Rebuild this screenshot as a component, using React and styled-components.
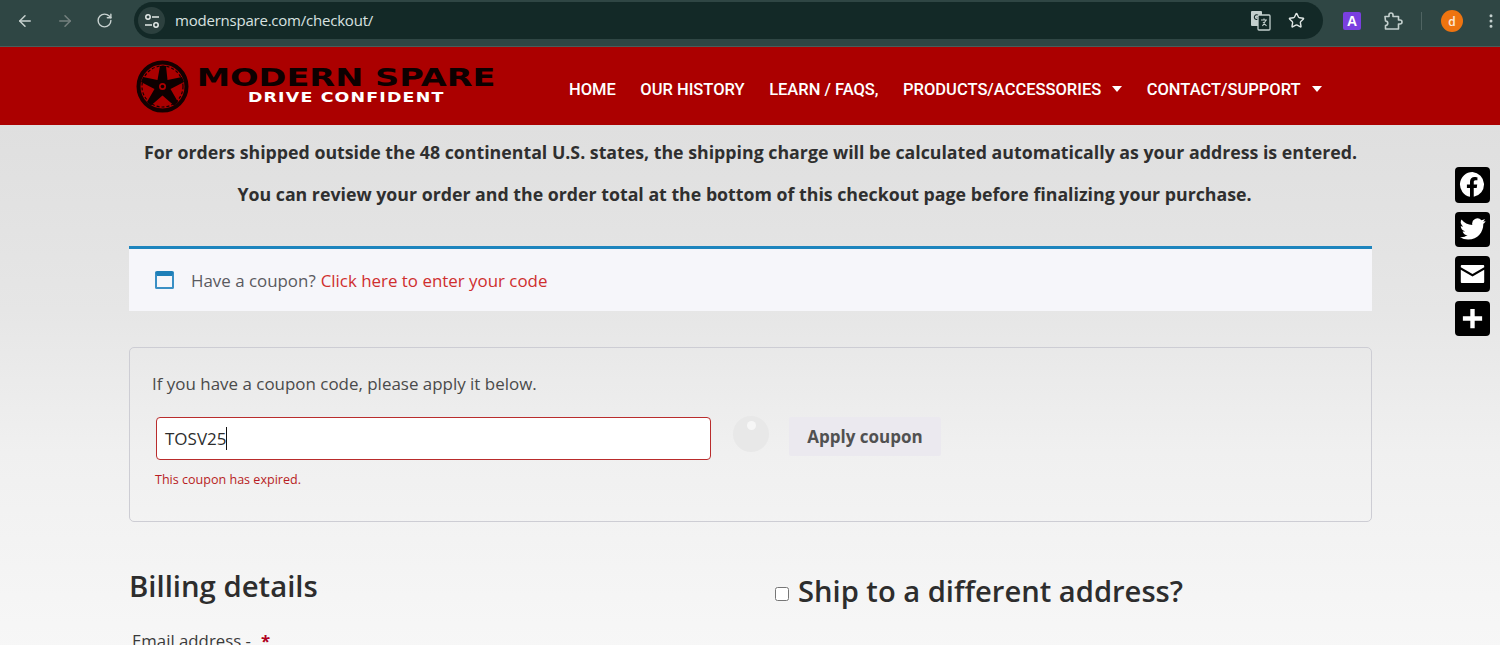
import styled, { createGlobalStyle } from "styled-components"
import { ArrowLeft, ArrowRight, RotateCw, Star, EllipsisVertical } from "lucide-react"

const GlobalStyle = createGlobalStyle`
html, body {
  margin: 0;
  padding: 0;
  height: 645px;
  overflow: hidden;
  font-family: "Open Sans", "Noto Sans", sans-serif;
}
* { box-sizing: border-box; }
`

const Shell = styled.div`
  position: relative;
  width: 1500px;
  height: 645px;
  overflow: hidden;
  display: flex;
  flex-direction: column;
`

const BrowserBar = styled.div`
  height: 47px;
  flex: none;
  background: #2f4644;
  border-bottom: 1px solid #4a5c5a;
  display: flex;
  align-items: flex-start;
  padding: 2px 0 0 16px;
`

const NavIcons = styled.div`
  display: flex;
  gap: 22px;
  width: 118px;
  padding-top: 10px;
  color: #c8d2d0;
`

const Dim = styled.span`
  color: #75817f;
  display: flex;
`

const Omnibox = styled.div`
  width: 1189px;
  height: 37px;
  background: #132927;
  border-radius: 19px;
  display: flex;
  align-items: center;
  padding: 0 18px 0 4px;
  color: #dfe6e4;
`

const SiteChip = styled.div`
  width: 27px;
  height: 27px;
  border-radius: 50%;
  background: #2c403e;
  display: flex;
  align-items: center;
  justify-content: center;
  margin-right: 10px;
  color: #e4eae8;
`

const Url = styled.span`
  font-size: 15px;
  line-height: 18px;
  margin-top: -1px;
  flex: 1;
  color: #d9e2e0;
  letter-spacing: -0.22px;
`

const OmniActions = styled.div`
  display: flex;
  align-items: center;
  gap: 17px;
`

const ToolIcons = styled.div`
  display: flex;
  align-items: center;
  padding: 8px 0 0 20px;
  color: #c4d0ce;
`

const ExtBadge = styled.div`
  width: 18px;
  height: 18px;
  background: #7a3fe0;
  color: #fff;
  border-radius: 2px;
  font: 700 14px "Liberation Sans", sans-serif;
  display: flex;
  align-items: center;
  justify-content: center;
  margin-right: 22px;
`

const Divider = styled.div`
  width: 1px;
  height: 18px;
  background: #506462;
  margin: 0 19px 0 18px;
`

const Avatar = styled.div`
  width: 22px;
  height: 22px;
  border-radius: 50%;
  background: #ee7410;
  color: #fde6cf;
  font: 500 13px Roboto, sans-serif;
  display: flex;
  align-items: center;
  justify-content: center;
  margin-right: 19px;
`

const SiteHeader = styled.header`
  height: 78px;
  flex: none;
  background: #ab0000;
  display: flex;
  align-items: center;
  padding-left: 136px;
`

const Logo = styled.div`
  width: 433px;
  display: flex;
  align-items: center;
  gap: 8px;
`

const LogoWords = styled.div`
  display: flex;
  flex-direction: column;
  align-items: center;
  width: 298px;
`

const LogoTitle = styled.div`
  font: 700 24.5px/24px "DejaVu Sans", sans-serif;
  color: #0d0000;
  transform: scaleX(1.37);
  white-space: nowrap;
  margin-top: -2px;
`

const LogoTag = styled.div`
  font: 700 13.5px/14px "DejaVu Sans", sans-serif;
  color: #fff;
  transform: scaleX(1.29);
  letter-spacing: 0.9px;
  white-space: nowrap;
`

const Menu = styled.nav`
  display: flex;
  align-items: center;
  gap: 24.5px;
  padding-top: 6px;
`

const MenuItem = styled.a`
  font: 500 16.5px Roboto, sans-serif;
  color: #fff;
  display: flex;
  align-items: center;
  gap: 11px;
  white-space: nowrap;
`

const Caret = styled.span`
  width: 0;
  height: 0;
  border-left: 5px solid transparent;
  border-right: 5px solid transparent;
  border-top: 6px solid #fff;
`

const Page = styled.main`
  flex: 1;
  background: linear-gradient(180deg, #dfdfdf 0%, #e6e6e6 35%, #f0f0f0 62%, #f7f7f7 100%);
  padding: 0 128px 0 129px;
`

const Notice = styled.p`
  margin: 0;
  font-weight: 700;
  font-size: 17.75px;
  line-height: 24px;
  color: #2f2f2f;
  text-align: center;
  white-space: nowrap;
  padding-top: ${({ $top }) => $top}px;
  padding-right: ${({ $right }) => $right || 0}px;
`

const InfoBar = styled.div`
  margin-top: 40px;
  height: 65px;
  border-top: 3px solid #1e85be;
  background: #f6f6fa;
  display: flex;
  align-items: center;
  padding: 0 0 0 26px;
  font-size: 16.9px;
  color: #5a5a5f;
`

const WindowIcon = styled.span`
  width: 19px;
  height: 18px;
  border: 2px solid #3a8fc4;
  border-top-width: 5px;
  border-top-color: #1e7fb8;
  border-radius: 2px;
  margin-right: 17px;
`

const RedLink = styled.a`
  color: #cf2e2e;
  margin-left: 5px;
`

const CouponBox = styled.form`
  margin-top: 36px;
  height: 175px;
  border: 1px solid #cdcdd4;
  border-radius: 5px;
  padding: 23px 22px 0 22px;
`

const CouponHint = styled.p`
  margin: 0;
  font-size: 16.95px;
  line-height: 26px;
  color: #4a4a4a;
`

const CouponRow = styled.div`
  display: flex;
  align-items: flex-start;
  margin: 20px 0 0 4px;
`

const CodeInput = styled.div`
  width: 555px;
  height: 43px;
  background: #fff;
  border: 1px solid #b92c2c;
  border-radius: 4px;
  display: flex;
  align-items: center;
  padding-left: 8px;
  font-size: 17px;
  color: #2d2d2d;
`

const Cursor = styled.span`
  width: 1px;
  height: 23px;
  background: #111;
`

const Spinner = styled.span`
  position: relative;
  width: 36px;
  height: 36px;
  margin: -1px 20px 0 22px;
  border-radius: 50%;
  background: #e8e8e8;
  &::after {
    content: "";
    position: absolute;
    top: 5px;
    left: 14px;
    width: 9px;
    height: 9px;
    border-radius: 50%;
    background: #f6f6f6;
  }
`

const ApplyButton = styled.button`
  width: 152px;
  height: 39px;
  border: 0;
  border-radius: 2px;
  background: #ebe9ef;
  color: #515151;
  font: 700 17px "Open Sans", sans-serif;
`

const CouponError = styled.div`
  margin: 11px 0 0 3px;
  font-size: 12.55px;
  line-height: 18px;
  color: #b81c23;
`

const Columns = styled.div`
  display: grid;
  grid-template-columns: 645px 1fr;
  align-items: start;
  margin-top: 42px;
`

const BillingTitle = styled.h3`
  margin: 0;
  font-size: 29.3px;
  font-weight: 600;
  line-height: 44px;
  color: #2d2d2d;
`

const FieldLabel = styled.label`
  display: block;
  margin: 21px 0 0 3px;
  font-size: 16.8px;
  line-height: 24px;
  color: #3a3a3a;
`

const Required = styled.span`
  color: #b00020;
  font-weight: 700;
  margin-left: 10px;
`

const ShipTitle = styled.h3`
  margin: 5px 0 0;
  display: flex;
  align-items: center;
  font-size: 29.15px;
  font-weight: 600;
  line-height: 44px;
  color: #2d2d2d;
`

const ShipCheck = styled.input`
  width: 14px;
  height: 14px;
  margin: 5px 9px 0 1px;
`

const ShareRail = styled.div`
  position: absolute;
  top: 167px;
  left: 1455px;
  display: flex;
  flex-direction: column;
  gap: 9px;
`

const ShareButton = styled.a`
  width: 35px;
  height: 35.5px;
  background: #000;
  border-radius: 4px;
  display: flex;
  align-items: center;
  justify-content: center;
  color: #fff;
`

const TuneIcon = () => (
  <svg width="16" height="16" viewBox="0 0 16 16" fill="none" stroke="currentColor" strokeWidth="1.5">
    <circle cx="4" cy="4" r="2.2" />
    <path d="M8 4h7M1 12h7" />
    <circle cx="12" cy="12" r="2.2" />
  </svg>
)

const TranslateIcon = () => (
  <svg width="21" height="21" viewBox="0 0 21 21">
    <rect x="1" y="1" width="11" height="15" rx="1" fill="#c4d0ce" />
    <path d="M8.5 5.5a2.4 2.4 0 1 0 .6 2.2H6.8" fill="none" stroke="#132927" strokeWidth="1.1" />
    <rect x="8" y="5" width="12" height="15" rx="1" fill="#132927" stroke="#c4d0ce" strokeWidth="1.3" />
    <path d="M11 10h6M14 8.5v1.5M12.5 16l3.5-6M13 12l3.5 4" stroke="#c4d0ce" strokeWidth="1.1" fill="none" />
  </svg>
)

const ExtensionIcon = () => (
  <svg width="20" height="20" viewBox="0 0 20 20" fill="none" stroke="currentColor" strokeWidth="1.6" strokeLinejoin="round">
    <path d="M2 5.5h4V4a2 2 0 0 1 4 0v1.5h5.5V9H17a2 2 0 0 1 0 4h-1.5v5H2.5v-3.5c1.4 0 2.3-1 2.3-2.2S3.900 10 2.500 10z" />
  </svg>
)

const WheelLogo = () => (
  <svg width="53" height="53" viewBox="0 0 53 53">
    <circle cx="26.5" cy="26.5" r="24" fill="none" stroke="#140000" strokeWidth="4" />
    <circle cx="26.5" cy="26.5" r="20.5" fill="none" stroke="#140000" strokeWidth="1.2" strokeDasharray="3 2" />
    <path d="M24 6 H30 L31.500 20 L46 17 L48 22 L34.500 29 L42 42 L38 45.500 L26.500 35.500 L15 45.500 L11 42 L18.500 29 L5 22 L7 17 L21.500 20 Z" fill="#0d0000" />
    <circle cx="26.5" cy="26.5" r="3.5" fill="#ab0000" />
    <circle cx="26.5" cy="26.5" r="1.8" fill="#0d0000" />
  </svg>
)

const FacebookIcon = () => (
  <svg width="27" height="27" viewBox="0 0 28 28">
    <path fill="#fff" d="M14 1a13 13 0 0 0-2.6 25.74V17.500H8.200V14h3.200v-2.800c0-3.200 1.900-4.900 4.800-4.900 1.400 0 2.600.25 2.900.3v3.100h-1.900c-1.500 0-1.900.8-1.900 1.900V14h3.600l-.55 3.500H15.300v9.240A13 13 0 0 0 14 1z" />
  </svg>
)

const TwitterIcon = () => (
  <svg width="26" height="26" viewBox="0 0 24 24">
    <path fill="#fff" d="M23.600 4.600c-.9.4-1.800.7-2.800.8 1-.6 1.800-1.500 2.100-2.700-.9.6-2 1-3.100 1.200a4.900 4.900 0 0 0-8.400 4.500C7.400 8.200 3.800 6.200 1.400 3.200a4.900 4.900 0 0 0 1.500 6.600c-.8 0-1.600-.2-2.200-.6v.1c0 2.400 1.700 4.400 3.900 4.800-.7.2-1.500.2-2.200.1.600 2 2.400 3.400 4.600 3.400A9.900 9.900 0 0 1 0 19.600 13.900 13.900 0 0 0 7.500 21.800c9.100 0 14-7.500 14-14v-.6c1-.7 1.800-1.600 2.100-2.600z" />
  </svg>
)

const MailIcon = () => (
  <svg width="25" height="18" viewBox="0 0 26 20">
    <path fill="#fff" d="M1 0h24a1 1 0 0 1 1 1v1.600L13 10 0 2.600V1a1 1 0 0 1 1-1z" />
    <path fill="#fff" d="M0 5.400l13 7.400 13-7.400V19a1 1 0 0 1-1 1H1a1 1 0 0 1-1-1z" />
  </svg>
)

const PlusIcon = () => (
  <svg width="21" height="21" viewBox="0 0 24 24">
    <path fill="#fff" d="M9.500 1h5v8.500H23v5h-8.500V23h-5v-8.500H1v-5h8.500z" />
  </svg>
)

const App = () => {
  return (
    <Shell>
      <GlobalStyle />
      <BrowserBar>
        <NavIcons>
          <ArrowLeft size={18} />
          <Dim><ArrowRight size={18} /></Dim>
          <RotateCw size={17} />
        </NavIcons>
        <Omnibox>
          <SiteChip><TuneIcon /></SiteChip>
          <Url>modernspare.com/checkout/</Url>
          <OmniActions>
            <TranslateIcon />
            <Star size={17} />
          </OmniActions>
        </Omnibox>
        <ToolIcons>
          <ExtBadge>A</ExtBadge>
          <ExtensionIcon />
          <Divider />
          <Avatar>d</Avatar>
          <EllipsisVertical size={18} />
        </ToolIcons>
      </BrowserBar>

      <SiteHeader>
        <Logo>
          <WheelLogo />
          <LogoWords>
            <LogoTitle>MODERN SPARE</LogoTitle>
            <LogoTag>DRIVE CONFIDENT</LogoTag>
          </LogoWords>
        </Logo>
        <Menu>
          <MenuItem>HOME</MenuItem>
          <MenuItem>OUR HISTORY</MenuItem>
          <MenuItem>LEARN / FAQS,</MenuItem>
          <MenuItem>PRODUCTS/ACCESSORIES <Caret /></MenuItem>
          <MenuItem>CONTACT/SUPPORT <Caret /></MenuItem>
        </Menu>
      </SiteHeader>

      <Page>
        <Notice $top={15}>For orders shipped outside the 48 continental U.S. states, the shipping charge will be calculated automatically as your address is entered.</Notice>
        <Notice $top={18} $right={12}>You can review your order and the order total at the bottom of this checkout page before finalizing your purchase.</Notice>

        <InfoBar>
          <WindowIcon />
          Have a coupon? <RedLink>Click here to enter your code</RedLink>
        </InfoBar>

        <CouponBox onSubmit={(e) => e.preventDefault()}>
          <CouponHint>If you have a coupon code, please apply it below.</CouponHint>
          <CouponRow>
            <CodeInput>TOSV25<Cursor /></CodeInput>
            <Spinner />
            <ApplyButton type="button">Apply coupon</ApplyButton>
          </CouponRow>
          <CouponError>This coupon has expired.</CouponError>
        </CouponBox>

        <Columns>
          <div>
            <BillingTitle>Billing details</BillingTitle>
            <FieldLabel>Email address -<Required>*</Required></FieldLabel>
          </div>
          <ShipTitle>
            <ShipCheck type="checkbox" />
            Ship to a different address?
          </ShipTitle>
        </Columns>
      </Page>

      <ShareRail>
        <ShareButton><FacebookIcon /></ShareButton>
        <ShareButton><TwitterIcon /></ShareButton>
        <ShareButton><MailIcon /></ShareButton>
        <ShareButton><PlusIcon /></ShareButton>
      </ShareRail>
    </Shell>
  )
}

export default App
